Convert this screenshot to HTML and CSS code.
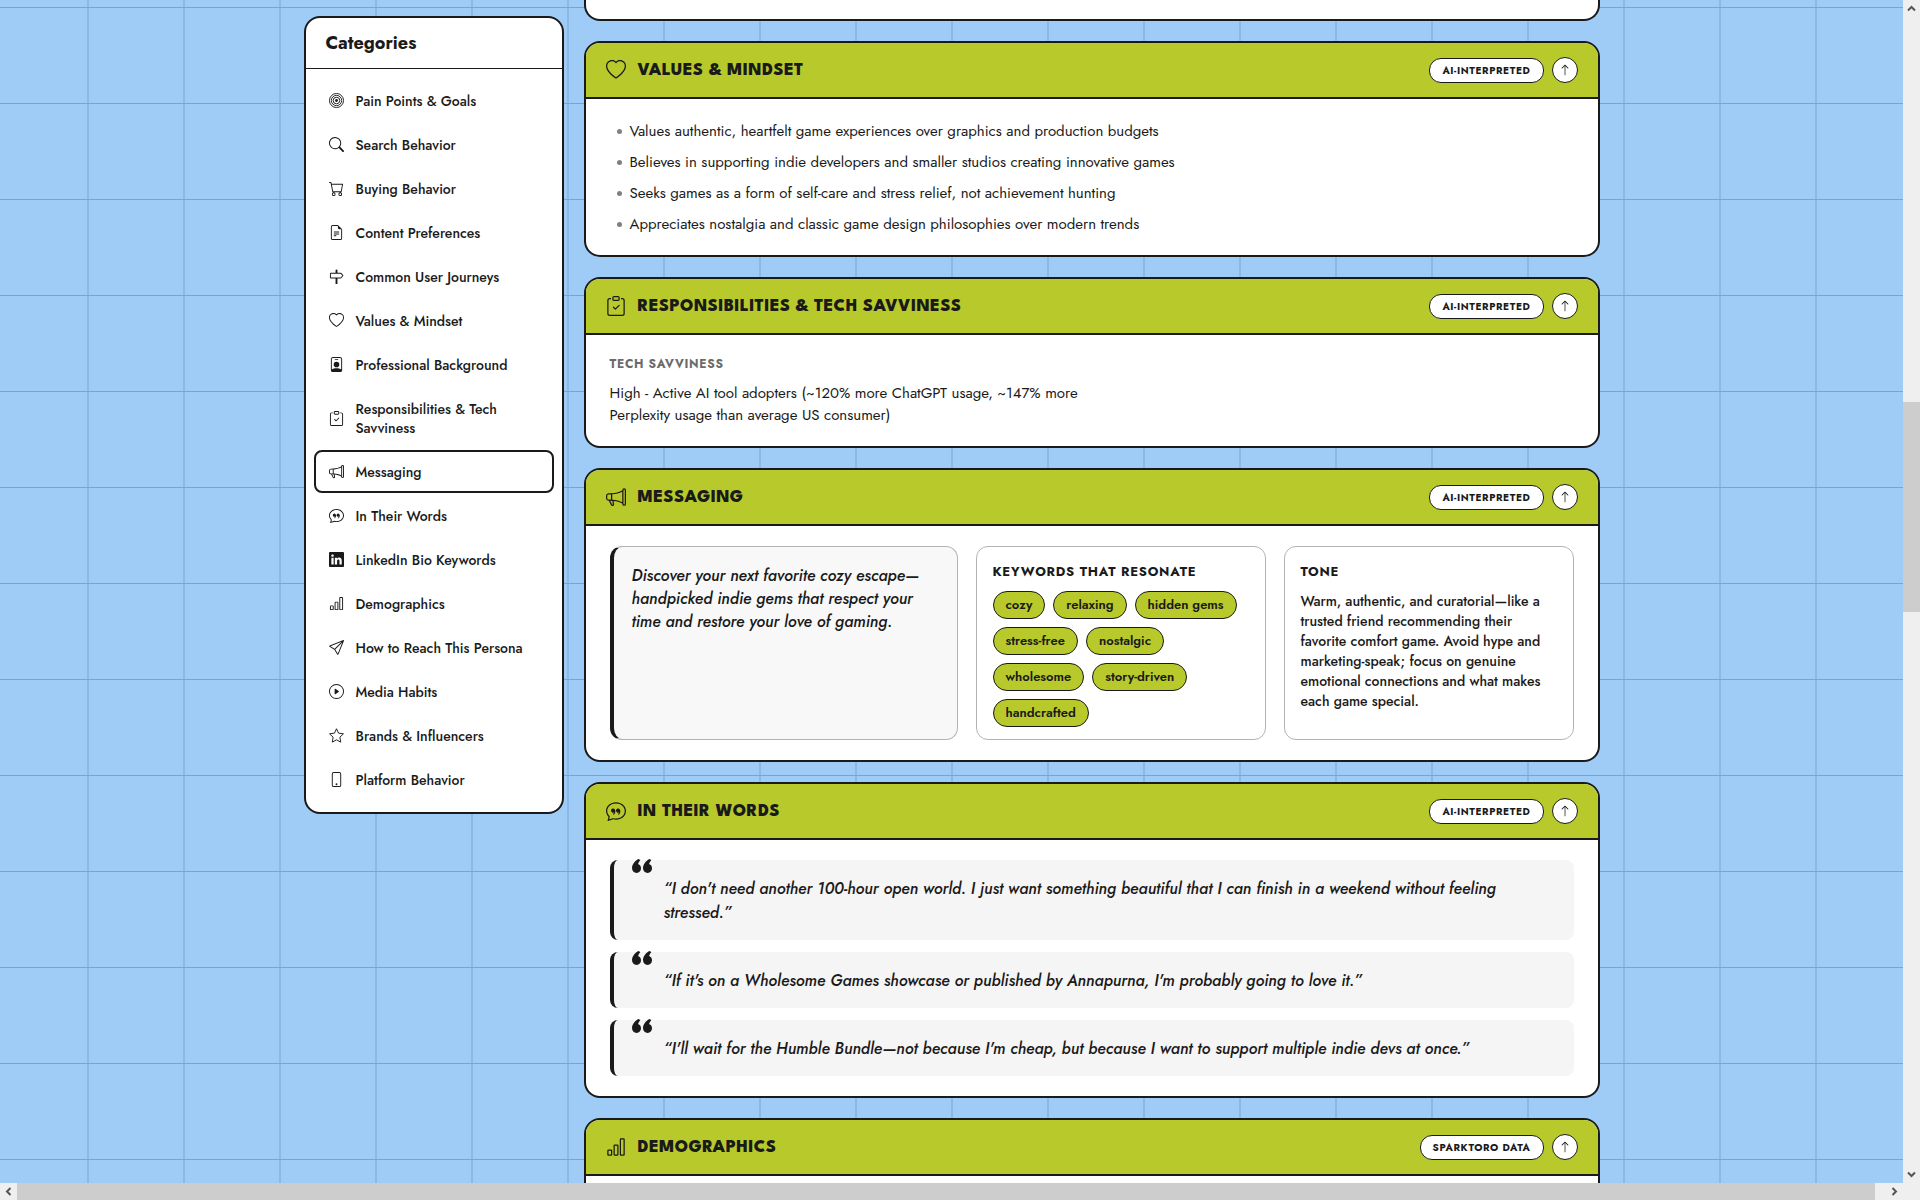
FILE: index.html
```html
<!DOCTYPE html>
<html lang="en">
<head>
<meta charset="utf-8">
<title>Persona report</title>
<link rel="stylesheet" href="styles.css">
</head>
<body>
<svg class="sprite" aria-hidden="true">
  <symbol id="i-bullseye" viewBox="0 0 16 16"><g fill="none" stroke="currentColor"><circle cx="8" cy="8" r="7.5"/><circle cx="8" cy="8" r="5.5"/><circle cx="8" cy="8" r="3.5"/></g><circle cx="8" cy="8" r="1.5"/></symbol>
  <symbol id="i-search" viewBox="0 0 16 16"><path d="M11.742 10.344a6.500 6.500 0 1 0-1.397 1.398h-.001q.044.06.098.115l3.850 3.850a1 1 0 0 0 1.415-1.414l-3.850-3.850a1 1 0 0 0-.115-.1zM12 6.500a5.500 5.500 0 1 1-11 0 5.500 5.500 0 0 1 11 0"/></symbol>
  <symbol id="i-cart" viewBox="0 0 16 16"><path d="M0 1.500A.5.5 0 0 1 .5 1H2a.5.5 0 0 1 .485.379L2.890 3H14.500a.5.5 0 0 1 .491.592l-1.500 8A.5.5 0 0 1 13 12H4a.5.5 0 0 1-.491-.408L2.010 3.607 1.610 2H.5a.5.5 0 0 1-.5-.5M3.102 4l1.313 7h8.170l1.313-7zM5 12a2 2 0 1 0 0 4 2 2 0 0 0 0-4m7 0a2 2 0 1 0 0 4 2 2 0 0 0 0-4m-7 1a1 1 0 1 1 0 2 1 1 0 0 1 0-2m7 0a1 1 0 1 1 0 2 1 1 0 0 1 0-2"/></symbol>
  <symbol id="i-file" viewBox="0 0 16 16"><path d="M5.500 7a.5.5 0 0 0 0 1h5a.5.5 0 0 0 0-1zM5 9.500a.5.5 0 0 1 .5-.5h5a.5.5 0 0 1 0 1h-5a.5.5 0 0 1-.5-.5m0 2a.5.5 0 0 1 .5-.5h2a.5.5 0 0 1 0 1h-2a.5.5 0 0 1-.5-.5"/><path d="M9.500 0H4a2 2 0 0 0-2 2v12a2 2 0 0 0 2 2h8a2 2 0 0 0 2-2V4.500zm0 1v2A1.500 1.500 0 0 0 11 4.500h2V14a1 1 0 0 1-1 1H4a1 1 0 0 1-1-1V2a1 1 0 0 1 1-1z"/></symbol>
  <symbol id="i-signpost" viewBox="0 0 16 16"><path d="M7 1.414V4H2a1 1 0 0 0-1 1v4a1 1 0 0 0 1 1h5v6h2v-6h3.532a1 1 0 0 0 .768-.36l1.933-2.320a.5.5 0 0 0 0-.64L13.300 4.360a1 1 0 0 0-.768-.36H9V1.414a1 1 0 0 0-2 0M12.532 5l1.666 2-1.666 2H2V5z"/></symbol>
  <symbol id="i-heart" viewBox="0 0 16 16"><path d="m8 2.748-.717-.737C5.600.281 2.514.878 1.400 3.053c-.523 1.023-.641 2.500.314 4.385.92 1.815 2.834 3.989 6.286 6.357 3.452-2.368 5.365-4.542 6.286-6.357.955-1.886.838-3.362.314-4.385C13.486.878 10.400.28 8.717 2.010zM8 15C-7.333 4.868 3.279-3.040 7.824 1.143q.09.083.176.171a3 3 0 0 1 .176-.17C12.720-3.042 23.333 4.867 8 15"/></symbol>
  <symbol id="i-badge" viewBox="0 0 16 16"><path d="M6.500 2a.5.5 0 0 0 0 1h3a.5.5 0 0 0 0-1zM11 8a3 3 0 1 1-6 0 3 3 0 0 1 6 0"/><path d="M4.500 0A2.500 2.500 0 0 0 2 2.500V14a2 2 0 0 0 2 2h8a2 2 0 0 0 2-2V2.500A2.500 2.500 0 0 0 11.500 0zM3 2.500A1.500 1.500 0 0 1 4.500 1h7A1.500 1.500 0 0 1 13 2.500v10.795a4.200 4.200 0 0 0-.776-.492C11.392 12.387 10.063 12 8 12s-3.392.387-4.224.803a4.200 4.200 0 0 0-.776.492z"/></symbol>
  <symbol id="i-clipboard" viewBox="0 0 16 16"><path d="M10.854 7.146a.5.5 0 0 1 0 .708l-3 3a.5.5 0 0 1-.708 0l-1.500-1.500a.5.5 0 1 1 .708-.708L7.500 9.793l2.646-2.647a.5.5 0 0 1 .708 0"/><path d="M4 1.500H3a2 2 0 0 0-2 2V14a2 2 0 0 0 2 2h10a2 2 0 0 0 2-2V3.500a2 2 0 0 0-2-2h-1v1h1a1 1 0 0 1 1 1V14a1 1 0 0 1-1 1H3a1 1 0 0 1-1-1V3.500a1 1 0 0 1 1-1h1z"/><path d="M9.500 1a.5.5 0 0 1 .5.5v1a.5.5 0 0 1-.5.5h-3a.5.5 0 0 1-.5-.5v-1a.5.5 0 0 1 .5-.5zm-3-1A1.500 1.500 0 0 0 5 1.500v1A1.500 1.500 0 0 0 6.500 4h3A1.500 1.500 0 0 0 11 2.500v-1A1.500 1.500 0 0 0 9.500 0z"/></symbol>
  <symbol id="i-megaphone" viewBox="0 0 16 16"><path d="M13 2.500a1.500 1.500 0 0 1 3 0v11a1.500 1.500 0 0 1-3 0v-.214c-2.162-1.241-4.490-1.843-6.912-2.083l.405 2.712A1 1 0 0 1 5.510 15.100h-.548a1 1 0 0 1-.916-.599l-1.850-3.490-.202-.003A2.014 2.014 0 0 1 0 9V7a2.020 2.020 0 0 1 1.992-2.013 75 75 0 0 0 2.483-.075c3.043-.154 6.148-.849 8.525-2.199zm1 0v11a.5.5 0 0 0 1 0v-11a.5.5 0 0 0-1 0m-1 1.350c-2.344 1.205-5.209 1.842-8 2.033v4.233q.27.015.537.036c2.568.189 5.093.744 7.463 1.993zm-9 6.215v-4.130a95 95 0 0 1-1.992.052A1.020 1.020 0 0 0 1 7v2c0 .55.448 1.002 1.006 1.009A61 61 0 0 1 4 10.065m-.657.975 1.609 3.037.01.024h.548l-.002-.014-.443-2.966a68 68 0 0 0-1.722-.082z"/></symbol>
  <symbol id="i-chat" viewBox="0 0 16 16"><path d="M2.678 11.894a1 1 0 0 1 .287.801 11 11 0 0 1-.398 2c1.395-.323 2.247-.697 2.634-.893a1 1 0 0 1 .71-.074A8 8 0 0 0 8 14c3.996 0 7-2.807 7-6s-3.004-6-7-6-7 2.808-7 6c0 1.468.617 2.830 1.678 3.894m-.493 3.905a22 22 0 0 1-.713.129c-.2.032-.352-.176-.273-.362a10 10 0 0 0 .244-.637l.003-.01c.248-.72.45-1.548.524-2.319C.743 11.370 0 9.760 0 8c0-3.866 3.582-7 8-7s8 3.134 8 7-3.582 7-8 7a9 9 0 0 1-2.347-.306c-.52.263-1.639.742-3.468 1.105"/><path d="M7.066 6.760A1.665 1.665 0 0 0 4 7.668a1.667 1.667 0 0 0 2.561 1.406c-.131.389-.375.804-.777 1.220a.417.417 0 0 0 .6.58c1.486-1.540 1.293-3.214.682-4.112zm4 0A1.665 1.665 0 0 0 8 7.668a1.667 1.667 0 0 0 2.561 1.406c-.131.389-.375.804-.777 1.220a.417.417 0 0 0 .6.58c1.486-1.540 1.293-3.214.682-4.112z"/></symbol>
  <symbol id="i-linkedin" viewBox="0 0 16 16"><path d="M0 1.146C0 .513.526 0 1.175 0h13.650C15.474 0 16 .513 16 1.146v13.708c0 .633-.526 1.146-1.175 1.146H1.175C.526 16 0 15.487 0 14.854zm4.943 12.248V6.169H2.542v7.225zm-1.200-8.212c.837 0 1.358-.554 1.358-1.248-.015-.709-.52-1.248-1.342-1.248S2.400 3.226 2.400 3.934c0 .694.521 1.248 1.327 1.248zm4.908 8.212V9.359c0-.216.016-.432.08-.586.173-.431.568-.878 1.232-.878.869 0 1.216.662 1.216 1.634v3.865h2.401V9.250c0-2.220-1.184-3.252-2.764-3.252-1.274 0-1.845.7-2.165 1.193v.025h-.016l.016-.025V6.169h-2.400c.03.678 0 7.225 0 7.225z"/></symbol>
  <symbol id="i-bars" viewBox="0 0 16 16"><path d="M4 11H2v3h2zm5-4H7v7h2zm5-5v12h-2V2zm-2-1a1 1 0 0 0-1 1v12a1 1 0 0 0 1 1h2a1 1 0 0 0 1-1V2a1 1 0 0 0-1-1zM6 7a1 1 0 0 1 1-1h2a1 1 0 0 1 1 1v7a1 1 0 0 1-1 1H7a1 1 0 0 1-1-1zm-5 4a1 1 0 0 1 1-1h2a1 1 0 0 1 1 1v3a1 1 0 0 1-1 1H2a1 1 0 0 1-1-1z"/></symbol>
  <symbol id="i-send" viewBox="0 0 16 16"><path d="M15.854.146a.5.5 0 0 1 .11.54l-5.819 14.547a.75.75 0 0 1-1.329.124l-3.178-4.995L.643 7.184a.75.75 0 0 1 .124-1.330L15.314.037a.5.5 0 0 1 .54.11ZM6.636 10.070l2.761 4.338L14.130 2.576zm6.787-8.201L1.591 6.602l4.339 2.760z"/></symbol>
  <symbol id="i-play" viewBox="0 0 16 16"><path d="M8 15A7 7 0 1 1 8 1a7 7 0 0 1 0 14m0 1A8 8 0 1 0 8 0a8 8 0 0 0 0 16"/><path d="M6.271 5.055a.5.5 0 0 1 .52.038l3.500 2.500a.5.5 0 0 1 0 .814l-3.500 2.500A.5.5 0 0 1 6 10.500v-5a.5.5 0 0 1 .271-.445"/></symbol>
  <symbol id="i-star" viewBox="0 0 16 16"><path d="M8 .8l2.200 4.700 5.200.7-3.800 3.600.9 5.300L8 12.600l-4.500 2.500.9-5.300L.6 6.200l5.200-.7z" fill="none" stroke="currentColor" stroke-linejoin="round"/></symbol>
  <symbol id="i-phone" viewBox="0 0 16 16"><path d="M11 1a1 1 0 0 1 1 1v12a1 1 0 0 1-1 1H5a1 1 0 0 1-1-1V2a1 1 0 0 1 1-1zM5 0a2 2 0 0 0-2 2v12a2 2 0 0 0 2 2h6a2 2 0 0 0 2-2V2a2 2 0 0 0-2-2z"/><path d="M8 14a1 1 0 1 0 0-2 1 1 0 0 0 0 2"/></symbol>
  <symbol id="i-up" viewBox="0 0 16 16"><path d="M8 15a.5.5 0 0 0 .5-.5V2.707l3.146 3.147a.5.5 0 0 0 .708-.708l-4-4a.5.5 0 0 0-.708 0l-4 4a.5.5 0 1 0 .708.708L7.500 2.707V14.500a.5.5 0 0 0 .5.5"/></symbol>
  <symbol id="i-quote" viewBox="0 0 20 14"><path d="M6.400 0 8.400 1C7.200 2.300 6.400 3.600 6.100 5 7.900 5.600 9 7.200 9 9.300 9 12 7.200 14 4.600 14 1.900 14 0 12 0 9.100 0 5.600 2.700 2 6.400 0zM17.400 0l2 1c-1.200 1.300-2 2.600-2.300 4 1.800.6 2.900 2.200 2.900 4.300 0 2.700-1.800 4.700-4.400 4.700-2.700 0-4.600-2-4.600-4.900 0-3.500 2.700-7.100 6.400-9.100z"/></symbol>
  <symbol id="i-chevron" viewBox="0 0 9 6"><path d="M1 5l3.500-3.500L8 5" fill="none" stroke="currentColor" stroke-width="2"/></symbol>
</svg>

<div class="window">
  <div class="viewport">
    <div class="page">
      <nav class="sidebar" aria-label="Categories">
        <h2 class="sidebar-title">Categories</h2>
        <div class="sidebar-list">
          <a class="nav-item" href="#pain"><svg class="nav-icon"><use href="#i-bullseye"/></svg>Pain Points &amp; Goals</a>
          <a class="nav-item" href="#search"><svg class="nav-icon"><use href="#i-search"/></svg>Search Behavior</a>
          <a class="nav-item" href="#buying"><svg class="nav-icon"><use href="#i-cart"/></svg>Buying Behavior</a>
          <a class="nav-item" href="#content"><svg class="nav-icon"><use href="#i-file"/></svg>Content Preferences</a>
          <a class="nav-item" href="#journeys"><svg class="nav-icon"><use href="#i-signpost"/></svg>Common User Journeys</a>
          <a class="nav-item" href="#values"><svg class="nav-icon"><use href="#i-heart"/></svg>Values &amp; Mindset</a>
          <a class="nav-item" href="#background"><svg class="nav-icon"><use href="#i-badge"/></svg>Professional Background</a>
          <a class="nav-item" href="#tech"><svg class="nav-icon"><use href="#i-clipboard"/></svg>Responsibilities &amp; Tech Savviness</a>
          <a class="nav-item nav-item--active" href="#messaging" aria-current="true"><svg class="nav-icon"><use href="#i-megaphone"/></svg>Messaging</a>
          <a class="nav-item" href="#words"><svg class="nav-icon"><use href="#i-chat"/></svg>In Their Words</a>
          <a class="nav-item" href="#linkedin"><svg class="nav-icon"><use href="#i-linkedin"/></svg>LinkedIn Bio Keywords</a>
          <a class="nav-item" href="#demographics"><svg class="nav-icon"><use href="#i-bars"/></svg>Demographics</a>
          <a class="nav-item" href="#reach"><svg class="nav-icon"><use href="#i-send"/></svg>How to Reach This Persona</a>
          <a class="nav-item" href="#media"><svg class="nav-icon"><use href="#i-play"/></svg>Media Habits</a>
          <a class="nav-item" href="#brands"><svg class="nav-icon"><use href="#i-star"/></svg>Brands &amp; Influencers</a>
          <a class="nav-item" href="#platform"><svg class="nav-icon"><use href="#i-phone"/></svg>Platform Behavior</a>
        </div>
      </nav>

      <main class="content">
        <section class="card card--tail"></section>

        <section class="card" id="values">
          <header class="card-head">
            <svg class="card-icon"><use href="#i-heart"/></svg>
            <h2 class="card-title">Values &amp; Mindset</h2>
            <span class="source">AI-Interpreted</span>
            <button class="to-top" type="button" aria-label="Back to top"><svg class="to-top-icon"><use href="#i-up"/></svg></button>
          </header>
          <ul class="facts">
            <li>Values authentic, heartfelt game experiences over graphics and production budgets</li>
            <li>Believes in supporting indie developers and smaller studios creating innovative games</li>
            <li>Seeks games as a form of self-care and stress relief, not achievement hunting</li>
            <li>Appreciates nostalgia and classic game design philosophies over modern trends</li>
          </ul>
        </section>

        <section class="card" id="tech">
          <header class="card-head">
            <svg class="card-icon"><use href="#i-clipboard"/></svg>
            <h2 class="card-title">Responsibilities &amp; Tech Savviness</h2>
            <span class="source">AI-Interpreted</span>
            <button class="to-top" type="button" aria-label="Back to top"><svg class="to-top-icon"><use href="#i-up"/></svg></button>
          </header>
          <div class="card-body">
            <h3 class="field-label">Tech Savviness</h3>
            <p class="field-text">High - Active AI tool adopters (~120% more ChatGPT usage, ~147% more Perplexity usage than average US consumer)</p>
          </div>
        </section>

        <section class="card" id="messaging">
          <header class="card-head">
            <svg class="card-icon"><use href="#i-megaphone"/></svg>
            <h2 class="card-title">Messaging</h2>
            <span class="source">AI-Interpreted</span>
            <button class="to-top" type="button" aria-label="Back to top"><svg class="to-top-icon"><use href="#i-up"/></svg></button>
          </header>
          <div class="card-body messaging">
            <p class="pitch">Discover your next favorite cozy escape—handpicked indie gems that respect your time and restore your love of gaming.</p>
            <div class="panel">
              <h3 class="panel-title">Keywords That Resonate</h3>
              <div class="chips">
                <span class="chip">cozy</span><span class="chip">relaxing</span><span class="chip">hidden gems</span><span class="chip">stress-free</span><span class="chip">nostalgic</span><span class="chip">wholesome</span><span class="chip">story-driven</span><span class="chip">handcrafted</span>
              </div>
            </div>
            <div class="panel">
              <h3 class="panel-title">Tone</h3>
              <p class="tone">Warm, authentic, and curatorial—like a trusted friend recommending their favorite comfort game. Avoid hype and marketing-speak; focus on genuine emotional connections and what makes each game special.</p>
            </div>
          </div>
        </section>

        <section class="card" id="words">
          <header class="card-head">
            <svg class="card-icon"><use href="#i-chat"/></svg>
            <h2 class="card-title">In Their Words</h2>
            <span class="source">AI-Interpreted</span>
            <button class="to-top" type="button" aria-label="Back to top"><svg class="to-top-icon"><use href="#i-up"/></svg></button>
          </header>
          <div class="card-body quotes">
            <blockquote class="quote"><svg class="quote-mark"><use href="#i-quote"/></svg>“I don't need another 100-hour open world. I just want something beautiful that I can finish in a weekend without feeling stressed.”</blockquote>
            <blockquote class="quote"><svg class="quote-mark"><use href="#i-quote"/></svg>“If it's on a Wholesome Games showcase or published by Annapurna, I'm probably going to love it.”</blockquote>
            <blockquote class="quote"><svg class="quote-mark"><use href="#i-quote"/></svg>“I'll wait for the Humble Bundle—not because I'm cheap, but because I want to support multiple indie devs at once.”</blockquote>
          </div>
        </section>

        <section class="card" id="demographics">
          <header class="card-head">
            <svg class="card-icon"><use href="#i-bars"/></svg>
            <h2 class="card-title">Demographics</h2>
            <span class="source">SparkToro Data</span>
            <button class="to-top" type="button" aria-label="Back to top"><svg class="to-top-icon"><use href="#i-up"/></svg></button>
          </header>
          <div class="card-body"></div>
        </section>
      </main>
    </div>
  </div>

  <div class="bar bar--v" aria-hidden="true">
    <svg class="bar-arrow"><use href="#i-chevron"/></svg>
    <div class="bar-track bar-track--v"><div class="bar-thumb"></div></div>
    <svg class="bar-arrow bar-arrow--down"><use href="#i-chevron"/></svg>
  </div>
  <div class="bar bar--h" aria-hidden="true">
    <svg class="bar-arrow bar-arrow--left"><use href="#i-chevron"/></svg>
    <div class="bar-track bar-track--h"><div class="bar-thumb"></div></div>
    <svg class="bar-arrow bar-arrow--right"><use href="#i-chevron"/></svg>
  </div>
  <div class="bar-corner"></div>
</div>
</body>
</html>
```
FILE: styles.css
```css
:root {
  --ink: #1a1a1a;
  --lime: #b8c92c;
  --sky: #9fccf6;
  --grid: #78a3d3;
}

* { box-sizing: border-box; }

body {
  margin: 0;
  color: var(--ink);
  font-family: Jost, Lato, sans-serif;
  font-size: 15px;
}

h2, h3, p, ul, blockquote { margin: 0; padding: 0; }

svg { fill: currentColor; flex: none; }

.sprite { display: none; }

/* Window frame with its scroll bars */
.window {
  display: grid;
  grid-template: minmax(0, 1fr) 17px / minmax(0, 1fr) 17px;
  height: 100vh;
}

.viewport {
  overflow: hidden;
  background-color: var(--sky);
  background-image:
    linear-gradient(to right, var(--grid) 1px, transparent 1px),
    linear-gradient(to bottom, var(--grid) 1px, transparent 1px);
  background-size: 96px 96px;
  background-position: calc(50% + 48px) 7px;
}

.bar { display: flex; align-items: center; background: #efefef; color: #555; }
.bar--v { flex-direction: column; padding: 4px 0; }
.bar--h { padding: 0 4px; }
.bar-track { display: flex; flex: 1; align-self: stretch; }
.bar-track--v { flex-direction: column; margin: 4px 0; }
.bar-track--v::before { content: ""; flex: 385; }
.bar-track--v::after { content: ""; flex: 554; }
.bar-track--v .bar-thumb { flex: 210; }
.bar-track--h { margin: 0 15px 0 4px; }
.bar-thumb { flex: 1; background: #cdcdcd; }
.bar-arrow { width: 9px; height: 9px; }
.bar-arrow--down { transform: rotate(180deg); }
.bar-arrow--left { transform: rotate(270deg); }
.bar-arrow--right { transform: rotate(90deg); }
.bar-corner { background: #efefef; }

/* Page columns */
.page {
  display: flex;
  align-items: flex-start;
  gap: 20px;
  max-width: 1296px;
  margin: 0 auto;
}

.content {
  display: flex;
  flex: 1;
  flex-direction: column;
  gap: 20px;
  min-width: 0;
}

/* Category navigation */
.sidebar {
  flex: none;
  width: 260px;
  margin-top: 16px;
  border: 2px solid var(--ink);
  border-radius: 16px;
  background: #fff;
}

.sidebar-title {
  padding: 13px 20px;
  border-bottom: 1px solid var(--ink);
  font-size: 18px;
  font-weight: 700;
  line-height: 24px;
}

.sidebar-list {
  display: flex;
  flex-direction: column;
  gap: 1px;
  padding: 10px 8px 11px;
}

.nav-item {
  display: flex;
  align-items: center;
  gap: 12px;
  min-height: 43px;
  padding: 11px 13px 9px;
  border: 2px solid transparent;
  border-radius: 8px;
  color: inherit;
  font-size: 14px;
  font-weight: 500;
  line-height: 19px;
  text-decoration: none;
}

.nav-item--active { border-color: var(--ink); }

.nav-icon { width: 15px; height: 15px; margin-bottom: 2px; }

/* Cards */
.card {
  border: 2px solid var(--ink);
  border-radius: 16px;
  background: #fff;
  overflow: hidden;
}

.card--tail {
  padding-top: 19px;
  border-top: 0;
  border-top-left-radius: 0;
  border-top-right-radius: 0;
}

.card-head {
  display: flex;
  align-items: center;
  gap: 8px;
  padding: 14px 20px;
  border-bottom: 2px solid var(--ink);
  background: var(--lime);
}

.card-icon { width: 20px; height: 20px; }

.card-title {
  flex: 1;
  padding: 2px 0 0 4px;
  font-family: "League Spartan", Jost, Lato, sans-serif;
  font-size: 18px;
  font-weight: 800;
  letter-spacing: 0.02em;
  line-height: 24px;
  text-transform: uppercase;
}

.source {
  padding: 0 12px;
  border: 1px solid var(--ink);
  border-radius: 12px;
  background: #fff;
  font-size: 10px;
  font-weight: 700;
  letter-spacing: 0.06em;
  line-height: 23px;
  text-transform: uppercase;
}

.to-top {
  display: grid;
  place-items: center;
  width: 26px;
  height: 26px;
  padding: 0;
  border: 1px solid var(--ink);
  border-radius: 50%;
  background: #fff;
  color: var(--ink);
}

.to-top-icon { width: 12px; height: 12px; }

.card-body { padding: 20px 24px; }

.facts {
  padding: 16px 24px;
  list-style: none;
}

.facts li {
  display: flex;
  align-items: center;
  gap: 8px;
  padding: 5px 0 3px 7px;
  line-height: 23px;
}

.facts li::before {
  content: "";
  width: 5px;
  height: 5px;
  border-radius: 50%;
  background: #808080;
}

.field-label {
  margin-bottom: 9px;
  color: #6b6b6b;
  font-size: 12px;
  font-weight: 700;
  letter-spacing: 0.06em;
  line-height: 18px;
  text-transform: uppercase;
}

.field-text { max-width: 480px; line-height: 22px; }

/* Messaging */
.messaging {
  display: grid;
  grid-template-columns: 6fr 5fr 5fr;
  gap: 18px;
}

.pitch {
  padding: 17px 18px;
  border: 1px solid #b3b3b3;
  border-left: 4px solid var(--ink);
  border-radius: 12px;
  background: #f8f8f8;
  font-size: 16px;
  font-style: italic;
  font-weight: 500;
  line-height: 23px;
}

.panel {
  padding: 15px 16px 12px;
  border: 1px solid #b3b3b3;
  border-radius: 12px;
}

.panel-title {
  margin-bottom: 9px;
  font-size: 13px;
  font-weight: 700;
  letter-spacing: 0.06em;
  line-height: 20px;
  text-transform: uppercase;
}

.chips { display: flex; flex-wrap: wrap; gap: 8px; }

.chip {
  padding: 0 12px;
  border: 1px solid var(--ink);
  border-radius: 14px;
  background: var(--lime);
  font-size: 13px;
  font-weight: 600;
  line-height: 26px;
}

.tone { font-size: 14px; font-weight: 500; line-height: 20px; }

/* Quotes */
.quotes { display: flex; flex-direction: column; gap: 12px; }

.quote {
  position: relative;
  padding: 17px 50px 15px;
  border-left: 4px solid var(--ink);
  border-radius: 8px;
  background: #f5f5f5;
  font-size: 16px;
  font-style: italic;
  font-weight: 500;
  line-height: 24px;
}

.quote-mark {
  position: absolute;
  top: -1px;
  left: 18px;
  width: 20px;
  height: 14px;
}
```
